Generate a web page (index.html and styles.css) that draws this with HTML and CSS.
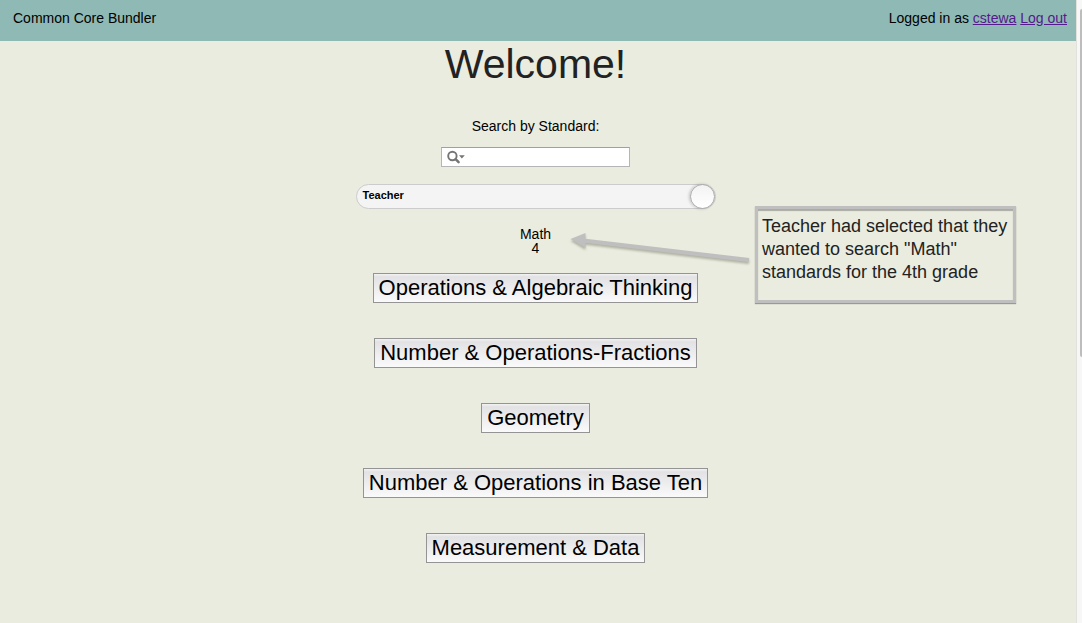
FILE: index.html
```html
<!DOCTYPE html>
<html lang="en">
<head>
<meta charset="utf-8">
<title>Common Core Bundler</title>
<link rel="stylesheet" href="styles.css">
</head>
<body>
<div class="page">
  <header class="topbar">
    <span>Common Core Bundler</span>
    <span>Logged in as <a href="#profile">cstewa</a> <a href="#logout">Log out</a></span>
  </header>
  <main class="content">
    <h1 class="title">Welcome!</h1>
    <form class="search">
      <label class="search-label" for="standard">Search by Standard:</label>
      <div class="search-field">
        <svg class="search-icon" width="19" height="14" viewBox="0 0 19 14" aria-hidden="true">
          <circle cx="5.4" cy="6" r="4.2" fill="none" stroke="#757575" stroke-width="1.9"/>
          <path d="M8.6 9.2L11.6 12.2" stroke="#757575" stroke-width="2.5" stroke-linecap="round"/>
          <path d="M12 5.2H17.8L14.9 8.6Z" fill="#757575"/>
        </svg>
        <input class="search-input" id="standard" type="text">
      </div>
    </form>
    <label class="switch">
      <input class="switch-input" type="checkbox" checked>
      <span class="switch-text">Teacher</span>
      <span class="switch-knob"></span>
    </label>
    <div class="selection"><div>Math</div><div>4</div></div>
    <div class="domains">
      <button class="domain" type="button">Operations &amp; Algebraic Thinking</button>
      <button class="domain" type="button">Number &amp; Operations-Fractions</button>
      <button class="domain" type="button">Geometry</button>
      <button class="domain" type="button">Number &amp; Operations in Base Ten</button>
      <button class="domain" type="button">Measurement &amp; Data</button>
    </div>
    <svg class="arrow" width="184" height="36" viewBox="0 0 184 36" aria-hidden="true">
      <path d="M13 8.5L179 28" stroke="#bfbfbf" stroke-width="4"/>
      <path d="M0.5 7L15.5 1V16Z" fill="#bfbfbf"/>
    </svg>
    <aside class="note">Teacher had selected that they wanted to search "Math" standards for the 4th grade</aside>
  </main>
</div>
<div class="scrollbar"><div class="thumb"></div></div>
</body>
</html>
```
FILE: styles.css
```css
* { box-sizing: border-box; }
body {
  display: flex;
  min-height: 100vh;
  margin: 0;
  background: #eaecdf;
  color: #000;
  font: 14px/16px "Liberation Sans", Arial, sans-serif;
}
.page { flex: 1; }
.topbar {
  display: flex;
  justify-content: space-between;
  padding: 10px 9px 15px 13px;
  background: #8fb9b5;
}
.topbar a { color: #551a8b; }
.content {
  position: relative;
  display: flex;
  flex-direction: column;
  align-items: center;
  padding-right: 5px;
}
.title {
  margin: 0;
  color: #222;
  font-size: 41px;
  font-weight: 400;
  line-height: 46px;
}
.search {
  display: flex;
  flex-direction: column;
  align-items: center;
  gap: 13px;
  padding-top: 31px;
}
.search-field {
  display: flex;
  align-items: center;
  width: 189px;
  height: 20px;
  padding-left: 5px;
  background: #fff;
  border: 1px solid #b5b5b5;
  border-top-color: #a0a0a0;
}
.search-input {
  flex: 1;
  min-width: 0;
  padding: 0;
  background: none;
  border: 0;
  outline: 0;
}
.switch {
  position: relative;
  display: flex;
  align-items: center;
  justify-content: space-between;
  width: 360px;
  height: 25px;
  margin-top: 17px;
  padding-left: 6px;
  background: #f4f4f4;
  border: 1px solid #ccc;
  border-radius: 13px;
}
.switch-input {
  position: absolute;
  inset: 0;
  margin: 0;
  opacity: 0;
}
.switch-text {
  padding-bottom: 3px;
  font-size: 11px;
  font-weight: 700;
}
.switch-knob {
  width: 25px;
  height: 25px;
  background: linear-gradient(#f3f3f3, #fff);
  border: 1px solid #aaa;
  border-radius: 50%;
  box-shadow: -1px 0 3px #0003;
}
.selection {
  margin-top: 18px;
  line-height: 14px;
  text-align: center;
}
.domains {
  display: flex;
  flex-direction: column;
  align-items: center;
  gap: 35px;
  padding: 18px 0 60px;
}
.domain {
  height: 30px;
  padding: 0 5px;
  background: linear-gradient(#f3f3f4 0, #e2e2e4 10%, #fafafb);
  border: 1px solid #949494;
  color: #000;
  font: 22px/26px "Liberation Sans", Arial, sans-serif;
}
.arrow {
  position: absolute;
  top: 191px;
  left: calc(50% + 32px);
  filter: drop-shadow(0 2px 1px #77776680);
}
.note {
  position: absolute;
  top: 165px;
  left: calc(50% + 217px);
  width: 261px;
  height: 97px;
  padding: 6px 0 0 4px;
  border: 3px solid #bfbfc0;
  box-shadow: 0 1px 1px #999b93, inset 0 2px 1px #aaaba3;
  color: #222;
  font-size: 18px;
  line-height: 23px;
}
.scrollbar {
  width: 6px;
  padding: 9px 0 0 3px;
  background: #f7f7f7;
  border-left: 1px solid #e2e2dc;
}
.thumb {
  height: 348px;
  background: #bdbdbd;
  border-radius: 2px 0 0 2px;
}
```
